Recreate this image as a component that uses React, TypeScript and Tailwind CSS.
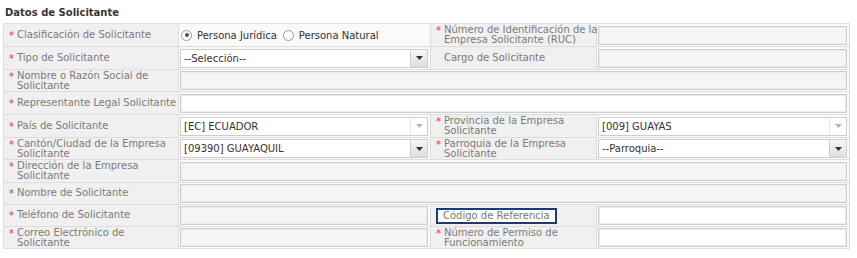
import React from "react";

const font = { fontFamily: '"DejaVu Sans", Verdana, sans-serif' };

function Star() {
  return <span className="text-[#e8323c] w-[8px] shrink-0 text-[10px] leading-[10px] mt-[1px]">*</span>;
}

function Label({ lines, req = true, className = "" }: { lines: string[]; req?: boolean; className?: string }) {
  return (
    <div className={"bg-[#f0f0f0] flex items-center pl-[5px] text-[10px] text-[#7a7a7a] " + className}>
      <div className="flex items-start">
        {req ? <Star /> : <span className="w-[8px] shrink-0" />}
        <div className="leading-[10px] whitespace-nowrap">
          {lines.map((l, i) => (
            <div key={i}>{l}</div>
          ))}
        </div>
      </div>
    </div>
  );
}

function Input({ gray = false, span = false }: { gray?: boolean; span?: boolean }) {
  return (
    <div className={"bg-[#fafafa] flex items-center pl-[1px] pr-[2px] " + (span ? "col-span-3" : "")}>
      <div
        className={
          "w-full h-[19px] border border-[#cdcdcd] shadow-[inset_0_0_0_1px_#ececec] " +
          (gray ? "bg-[#f5f5f5]" : "bg-white")
        }
      />
    </div>
  );
}

function Select({ value, disabled = false }: { value: string; disabled?: boolean }) {
  return (
    <div className="bg-[#fafafa] flex items-center pl-[1px] pr-[2px]">
      <div className="w-full h-[19px] border border-[#cdcdcd] bg-white flex items-center text-[10px] text-[#333]">
        <span className="flex-1 pl-[3px] whitespace-nowrap">{value}</span>
        <div
          className={
            "w-[17px] h-full flex items-center justify-center border-l " +
            (disabled
              ? "border-[#e6e6e6] bg-white"
              : "border-[#cdcdcd] bg-gradient-to-b from-[#f7f7f7] to-[#dedede]")
          }
        >
          <svg width="7" height="4" viewBox="0 0 7 4">
            <polygon points="0,0 7,0 3.5,4" fill={disabled ? "#b5b5b5" : "#333"} />
          </svg>
        </div>
      </div>
    </div>
  );
}

function Radio({ checked }: { checked?: boolean }) {
  return (
    <span className="w-[11px] h-[11px] rounded-full border border-[#9a9a9a] bg-white flex items-center justify-center shrink-0">
      {checked && <span className="w-[4px] h-[4px] rounded-full bg-[#555]" />}
    </span>
  );
}

export default function App() {
  return (
    <div className="w-[857px] h-[258px] bg-white" style={font}>
      <div className="h-[23px] flex items-center pl-[5px] pt-[2px] text-[10px] font-bold text-[#3a3430]">
        Datos de Solicitante
      </div>
      <div
        className="ml-[3px] w-[847px] bg-[#dddddd] p-px grid gap-px grid-cols-[174px_251px_165px_252px] grid-rows-[22px_22px_21px_22px_22px_21px_22px_21px_21px_21px]"
      >
        {/* Row 1 */}
        <Label lines={["Clasificación de Solicitante"]} />
        <div className="bg-[#fafafa] flex items-center pl-[2px] text-[10px] text-[#333]">
          <Radio checked />
          <span className="ml-[5px]">Persona Jurídica</span>
          <span className="ml-[6px]"><Radio /></span>
          <span className="ml-[5px]">Persona Natural</span>
        </div>
        <Label lines={["Número de Identificación de la", "Empresa Solicitante (RUC)"]} />
        <Input gray />

        {/* Row 2 */}
        <Label lines={["Tipo de Solicitante"]} />
        <Select value="--Selección--" />
        <Label lines={["Cargo de Solicitante"]} req={false} />
        <Input gray />

        {/* Row 3 */}
        <Label lines={["Nombre o Razón Social de", "Solicitante"]} />
        <Input gray span />

        {/* Row 4 */}
        <Label lines={["Representante Legal Solicitante"]} />
        <Input span />

        {/* Row 5 */}
        <Label lines={["País de Solicitante"]} />
        <Select value="[EC] ECUADOR" disabled />
        <Label lines={["Provincia de la Empresa", "Solicitante"]} />
        <Select value="[009] GUAYAS" disabled />

        {/* Row 6 */}
        <Label lines={["Cantón/Ciudad de la Empresa", "Solicitante"]} />
        <Select value="[09390] GUAYAQUIL" />
        <Label lines={["Parroquia de la Empresa", "Solicitante"]} />
        <Select value="--Parroquia--" />

        {/* Row 7 */}
        <Label lines={["Dirección de la Empresa", "Solicitante"]} />
        <Input gray span />

        {/* Row 8 */}
        <Label lines={["Nombre de Solicitante"]} />
        <Input gray span />

        {/* Row 9 */}
        <Label lines={["Teléfono de Solicitante"]} />
        <Input gray />
        <div className="bg-[#f0f0f0] flex items-center pl-[5px]">
          <div className="h-[16px] w-[121px] border-2 border-[#1c3b70] bg-white flex items-center pl-[5px] text-[10px] text-[#777] whitespace-nowrap">
            Código de Referencia
          </div>
        </div>
        <Input />

        {/* Row 10 */}
        <Label lines={["Correo Electrónico de", "Solicitante"]} />
        <Input gray />
        <Label lines={["Número de Permiso de", "Funcionamiento"]} />
        <Input />
      </div>
    </div>
  );
}
